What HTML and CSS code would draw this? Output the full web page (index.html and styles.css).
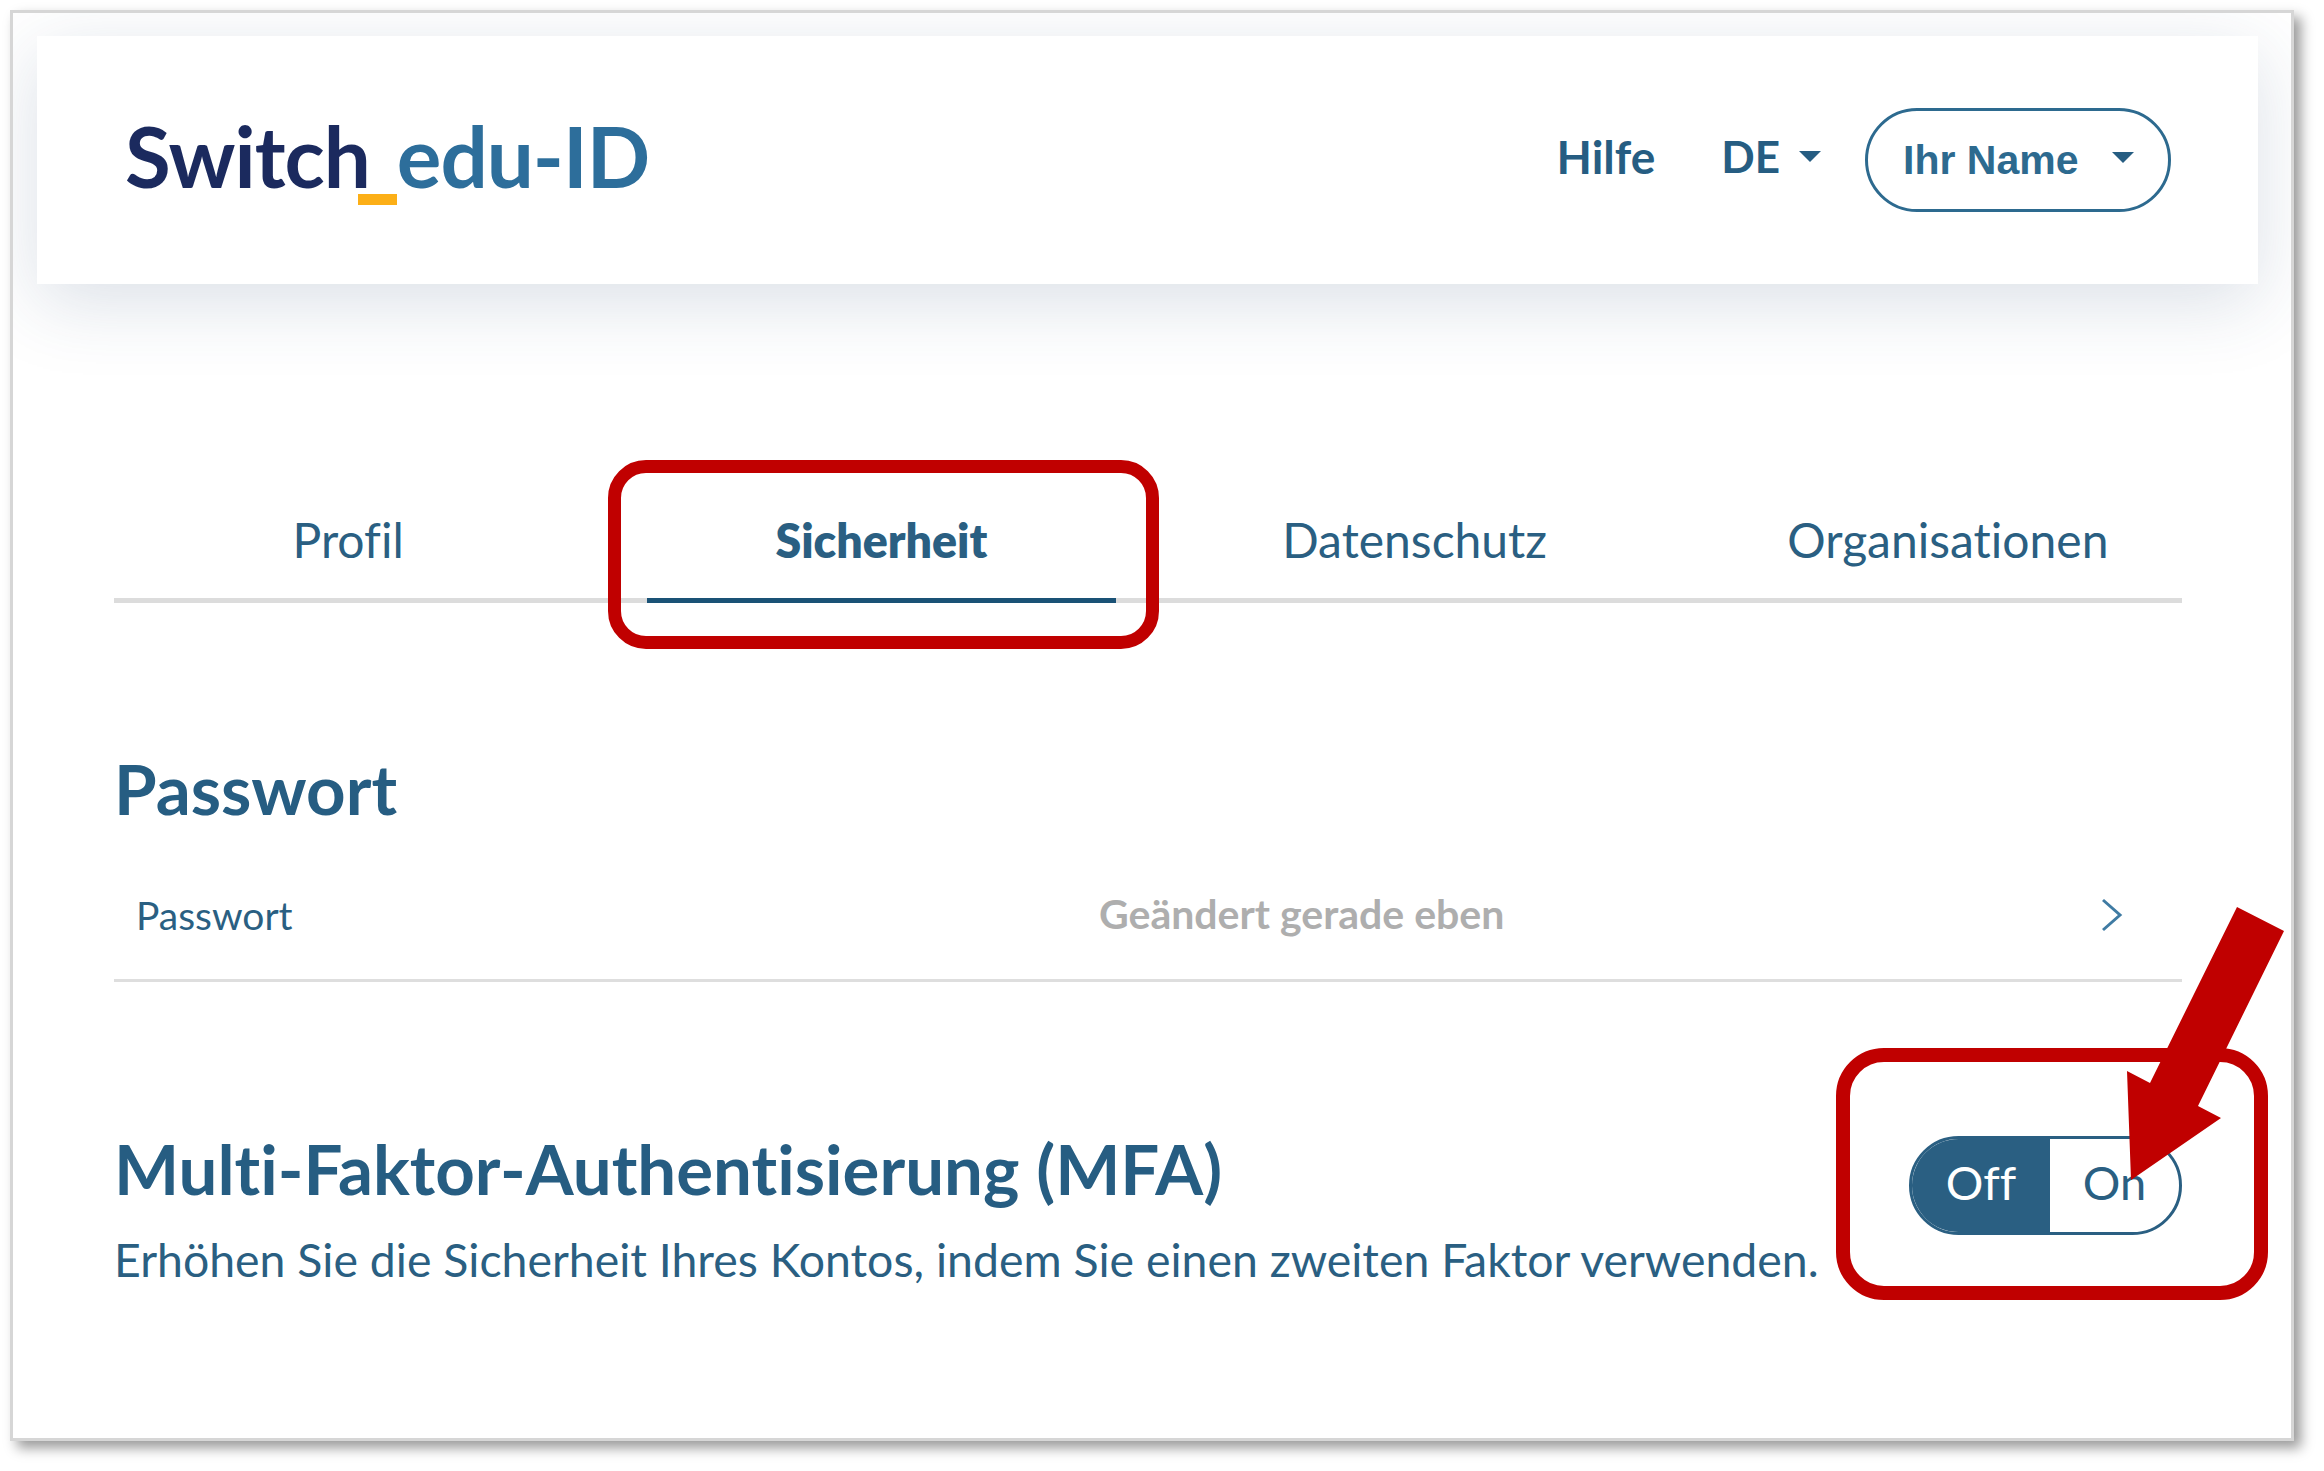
FILE: index.html
```html
<!DOCTYPE html>
<html lang="de">
<head>
  <meta charset="UTF-8">
  <title>Switch edu-ID</title>
  <link rel="stylesheet" href="styles.css">
</head>
<body>
  <div class="fenster">
    <header class="kopf">
      <div class="logo"><span class="logo-switch">Switch</span><span class="logo-strich"></span><span class="logo-edu">edu-ID</span></div>
      <nav class="kopf-nav">
        <a class="kopf-link">Hilfe</a>
        <a class="kopf-link kopf-sprache">DE <span class="caret"></span></a>
        <button class="name-btn">Ihr Name <span class="caret"></span></button>
      </nav>
    </header>

    <main class="inhalt">
      <div class="tabs">
        <a class="tab">Profil</a>
        <a class="tab tab-aktiv">Sicherheit</a>
        <a class="tab">Datenschutz</a>
        <a class="tab">Organisationen</a>
      </div>

      <h2 class="titel titel-passwort">Passwort</h2>
      <div class="zeile">
        <span class="zeile-name">Passwort</span>
        <span class="zeile-wert">Geändert gerade eben</span>
        <svg class="chevron" width="22" height="34" viewBox="0 0 22 34"><path d="M2 2 L19 17 L2 32" fill="none" stroke="#3f7ba3" stroke-width="3"/></svg>
      </div>

      <div class="mfa">
        <div class="mfa-text">
          <h2 class="titel titel-mfa">Multi-Faktor-Authentisierung (MFA)</h2>
          <p class="mfa-info">Erhöhen Sie die Sicherheit Ihres Kontos, indem Sie einen zweiten Faktor verwenden.</p>
        </div>
        <div class="schalter">
          <span class="schalter-off">Off</span>
          <span class="schalter-on">On</span>
        </div>
      </div>
    </main>
  </div>

  <!-- rote Markierungen liegen ueber dem Screenshot -->
  <div class="rahmen rahmen-tab"></div>
  <div class="rahmen rahmen-schalter"></div>
  <svg class="pfeil" width="2324" height="1471" viewBox="0 0 2324 1471">
    <polygon points="2237,907 2284,931 2198,1106 2221,1118 2131,1180 2127,1071 2150,1083" fill="#c00000"/>
  </svg>
</body>
</html>
```

FILE: styles.css
```css
* {
  box-sizing: border-box;
}
body {
  margin: 0;
  height: 1471px;
  overflow: hidden;
  background: #fff;
  font-family: "Lato", sans-serif;
  font-variant-ligatures: none;
  color: #2a5f82;
}
.fenster {
  margin: 10px 0 0 10px;
  width: 2284px;
  height: 1431px;
  border: 3px solid #d6d6d6;
  background: #fff;
  padding: 23px 33px 0 24px;
  box-shadow: 7px 7px 12px rgba(0, 0, 0, 0.4);
  overflow: hidden;
}
.kopf {
  height: 248px;
  background: #fff;
  display: flex;
  align-items: center;
  justify-content: space-between;
  padding: 0 87px 0 88px;
  box-shadow: 0 18px 70px rgba(40, 70, 110, 0.17);
}
.logo {
  display: flex;
  align-items: baseline;
  font-size: 83.5px;
  font-weight: 700;
  margin-top: -8px;
  letter-spacing: -1px;
}
.logo-switch {
  color: #1b2a5e;
}
.logo-strich {
  width: 39px;
  height: 11px;
  background: #fcaf17;
  margin-left: -12px;
  transform: translateY(17px);
}
.logo-edu {
  color: #2d6e9b;
  font-weight: 700;
}
.kopf-nav {
  display: flex;
  align-items: center;
  margin-top: -8px;
}
.kopf-link {
  font-size: 46px;
  font-weight: 700;
  color: #265d82;
  margin-right: 66px;
}
.kopf-sprache {
  font-size: 44px;
  margin-right: 44px;
  display: flex;
  align-items: center;
  gap: 19px;
}
.caret {
  display: inline-block;
  border-left: 11px solid transparent;
  border-right: 11px solid transparent;
  border-top: 11px solid #265d82;
}
.name-btn {
  width: 306px;
  height: 104px;
  border: 3px solid #2d6a8f;
  border-radius: 52px;
  background: #fff;
  color: #2d6a8f;
  font-family: "Liberation Sans", sans-serif;
  font-weight: 700;
  font-size: 41px;
  display: flex;
  align-items: center;
  justify-content: space-between;
  padding: 0 34px 0 35px;
  margin-top: 8px;
}
.name-btn .caret {
  margin-top: -6px;
}
.inhalt {
  padding: 0 76px 0 77px;
}
.tabs {
  margin-top: 154px;
  display: flex;
  gap: 65px;
  border-bottom: 5px solid #dcdcdc;
  height: 165px;
  align-items: stretch;
}
.tab {
  flex: 1;
  text-align: center;
  font-size: 48px;
  line-height: 204px;
  height: 165px;
  color: #2a5f82;
}
.tab-aktiv {
  font-size: 46.5px;
  font-weight: 800;
  border-bottom: 5px solid #1a5276;
}
.titel {
  margin: 0;
  font-weight: 700;
  color: #265d82;
}
.titel-passwort {
  font-size: 69px;
  line-height: 80px;
  margin-top: 146px;
}
.zeile {
  display: flex;
  align-items: center;
  height: 153px;
  border-bottom: 3px solid #dedede;
  padding: 22px 59px 0 22px;
}
.zeile-name {
  font-size: 39px;
  width: 963px;
}
.zeile-wert {
  font-size: 41px;
  color: #aeaeae;
  font-weight: 700;
  flex: 1;
  margin-top: -4px;
}
.mfa {
  display: flex;
  justify-content: space-between;
  margin-top: 147px;
}
.titel-mfa {
  font-size: 69px;
  line-height: 80px;
}
.mfa-info {
  margin: 20px 0 0;
  font-size: 46.4px;
  line-height: 60px;
}
.schalter {
  width: 273px;
  height: 99px;
  display: flex;
  border: 3px solid #2a5f82;
  border-radius: 50px;
  overflow: hidden;
  font-size: 47px;
  margin-top: 7px;
  flex-shrink: 0;
}
.schalter-off {
  width: 138px;
  background: #2a5f82;
  color: #fff;
  text-align: center;
  line-height: 86px;
}
.schalter-on {
  flex: 1;
  text-align: center;
  line-height: 86px;
}
.rahmen {
  position: absolute;
  border: 13px solid #c00000;
}
.rahmen-tab {
  left: 608px;
  top: 460px;
  width: 551px;
  height: 189px;
  border-radius: 38px;
}
.rahmen-schalter {
  left: 1836px;
  top: 1048px;
  width: 432px;
  height: 252px;
  border-width: 14px;
  border-radius: 48px;
}
.pfeil {
  position: absolute;
  left: 0;
  top: 0;
}
```
